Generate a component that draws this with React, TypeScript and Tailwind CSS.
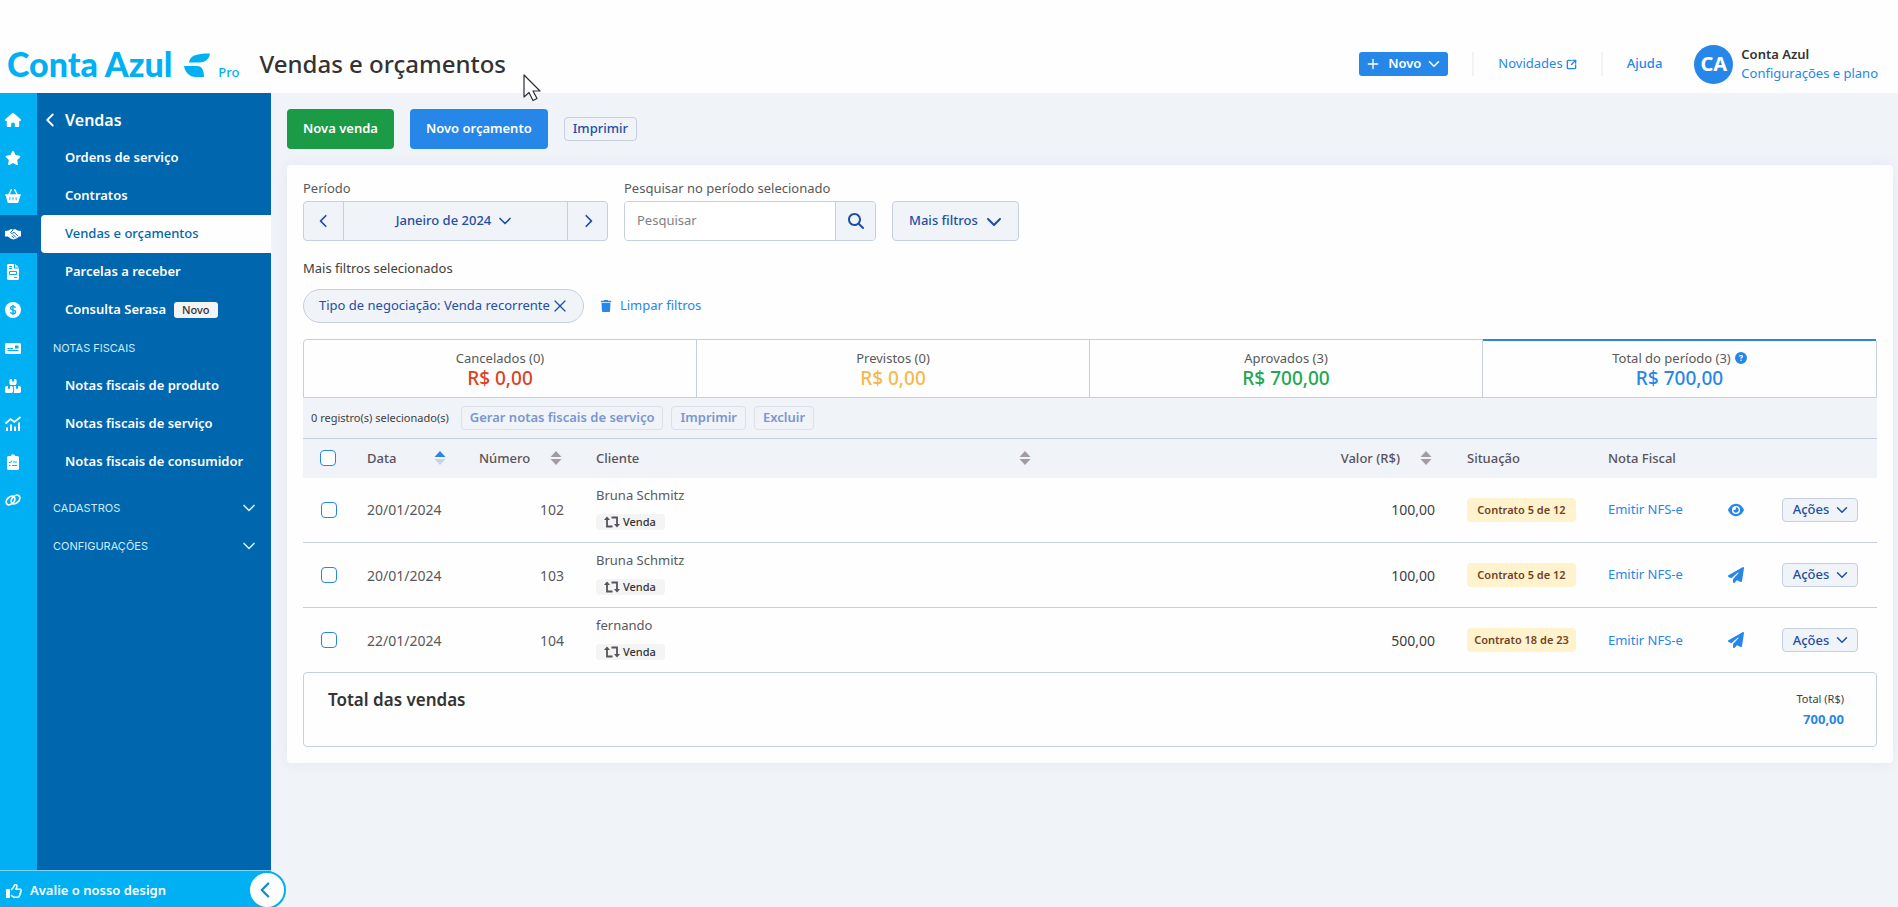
import React from "react";
import {
  FaBasketShopping,
  FaBoxesStacked,
  FaChevronDown,
  FaChevronLeft,
  FaChevronRight,
  FaCircleQuestion,
  FaEye,
  FaHouse,
  FaMagnifyingGlass,
  FaPaperPlane,
  FaRegThumbsUp,
  FaStar,
  FaTrash,
} from "react-icons/fa6";
import { ChevronDown, ChevronLeft, Plus, SquareArrowOutUpRight, X } from "lucide-react";

const HandshakeIcon = () => (
  <svg width="16" height="16" viewBox="0 0 16 16">
    <path
      fill="currentColor"
      d="M0 5l3.500-.500L6 3l2 .7L10 3l2.500 1.500L16 5v5.500h-2L12 12.300 8.500 13.500 5.500 12.500 3 10.500H0z"
    />
    <path d="M8 4 5.500 6.500 7 7.600 9 6.200 13 10M8 8.500l3 3M6.500 9.700l2.500 2.500" fill="none" stroke="#0066ad" strokeWidth=".900" />
  </svg>
);

const InvoiceIcon = () => (
  <svg width="16" height="16" viewBox="0 0 16 16">
    <path fill="currentColor" d="M2 1.500C2 .6 2.600 0 3.500 0H9v4.500h5v10c0 .9-.6 1.500-1.500 1.500h-9C2.600 16 2 15.400 2 14.500zM10 0l4 3.500h-4z" />
    <path d="M4 2.500h3M4 4.500h3M4.500 7.500h7v3h-7zM9 13.500h3" fill="none" stroke="#00b0f3" />
  </svg>
);

const CardIcon = () => (
  <svg width="16" height="16" viewBox="0 0 16 16">
    <rect y="3" width="16" height="11" rx="1.500" fill="currentColor" />
    <path d="M2.500 8.500H8M2.500 10.500h11" fill="none" stroke="#00b0f3" />
    <rect x="10" y="5.500" width="3.500" height="3" fill="#00b0f3" />
  </svg>
);

const DollarIcon = () => (
  <svg width="16" height="16" viewBox="0 0 16 16">
    <circle cx="8" cy="8" r="8" fill="currentColor" />
    <path
      d="M10.500 5.800C10.200 4.900 9.200 4.400 8 4.400c-1.400 0-2.500.7-2.500 1.800C5.500 8.600 10.600 7.300 10.600 9.800c0 1.100-1.200 1.900-2.600 1.900-1.300 0-2.300-.6-2.600-1.600M8 3v10"
      fill="none"
      stroke="#00b0f3"
      strokeWidth="1.400"
    />
  </svg>
);

const ChartIcon = () => (
  <svg width="16" height="16" viewBox="0 0 16 16" fill="none" stroke="currentColor" strokeWidth="1.700">
    <path d="M.5 7.500 5.500 3l4 3L15.500 1" />
    <path d="M2 15v-3.500M6 15V8.500M10 15v-4.500M14 15V6.500" strokeWidth="2" />
  </svg>
);

const ClipboardIcon = () => (
  <svg width="16" height="16" viewBox="0 0 16 16">
    <path
      fill="currentColor"
      d="M3.500 2h2.200a2.400 2.400 0 0 1 4.600 0h2.200A1.500 1.500 0 0 1 14 3.500v11a1.500 1.500 0 0 1-1.500 1.500h-9A1.500 1.500 0 0 1 2 14.500v-11A1.500 1.500 0 0 1 3.500 2z"
    />
    <path d="m4 8 1 1 2-2.500M8 8h4M4 11.500h1.500M7 11.500h5" fill="none" stroke="#00b0f3" />
  </svg>
);

const LinkIcon = () => (
  <svg width="16" height="16" viewBox="0 0 16 16" fill="none" stroke="currentColor" strokeWidth="1.700">
    <ellipse cx="5.500" cy="8.500" rx="5" ry="3.500" transform="rotate(-45 5.500 8.500)" />
    <ellipse cx="10.500" cy="7.500" rx="5" ry="3.500" transform="rotate(-45 10.500 7.500)" />
  </svg>
);

const railIcons = [
  { label: "Início", icon: <FaHouse /> },
  { label: "Favoritos", icon: <FaStar /> },
  { label: "Compras", icon: <FaBasketShopping /> },
  { label: "Vendas", icon: <HandshakeIcon />, active: true },
  { label: "Contratos", icon: <InvoiceIcon /> },
  { label: "Financeiro", icon: <DollarIcon /> },
  { label: "Conta", icon: <CardIcon /> },
  { label: "Estoque", icon: <FaBoxesStacked /> },
  { label: "Relatórios", icon: <ChartIcon /> },
  { label: "Contador", icon: <ClipboardIcon /> },
  { label: "Integrações", icon: <LinkIcon /> },
];

const tabs = [
  { label: "Cancelados (0)", value: "R$ 0,00", color: "text-[#d9431e]" },
  { label: "Previstos (0)", value: "R$ 0,00", color: "text-[#f6b84b]" },
  { label: "Aprovados (3)", value: "R$ 700,00", color: "text-[#22a652]" },
  { label: "Total do período (3)", value: "R$ 700,00", color: "text-[#2687e9]", active: true },
];

const rows = [
  { date: "20/01/2024", number: 102, client: "Bruna Schmitz", value: "100,00", status: "Contrato 5 de 12", seen: true },
  { date: "20/01/2024", number: 103, client: "Bruna Schmitz", value: "100,00", status: "Contrato 5 de 12" },
  { date: "22/01/2024", number: 104, client: "fernando", value: "500,00", status: "Contrato 18 de 23" },
];

const Logo = () => (
  <div className="flex items-end text-[#00b0f3]">
    <span className="font-[Lato] font-black text-[34px] leading-[36px]">Conta Azul</span>
    <svg width="26" height="25" viewBox="0 0 26 25" className="ml-3 mb-1 shrink-0" fill="currentColor">
      <path d="M5 9.500C6 3 11 .5 26 .5C25 6 22 9.500 15 9.500z" />
      <path d="M0 13h13c4 0 7 3 7 11H12C5 24 1 19 0 13z" />
    </svg>
    <span className="ml-2 text-[13px] leading-[20px] font-medium">Pro</span>
  </div>
);

const Header = () => (
  <header className="h-[93px] pt-[35px] pl-[7px] pr-5 flex items-center bg-[#fefefe]">
    <Logo />
    <h1 className="ml-5 text-[24px] leading-[32px] font-medium text-[#333]">Vendas e orçamentos</h1>
    <div className="ml-auto flex items-center">
      <button className="h-6 pl-[6px] pr-[5px] flex items-center rounded-[3px] bg-[#2687e9] text-white text-[13px] font-semibold">
        <Plus size={16} />
        <span className="ml-[7px] mr-1">Novo</span>
        <ChevronDown size={18} />
      </button>
      <span className="mx-6 w-[2px] h-6 bg-[#f0f3f8]" />
      <a href="#" className="flex items-center gap-[3px] text-[13px] text-[#2687e9]">
        Novidades <SquareArrowOutUpRight size={11} strokeWidth={3} />
      </a>
      <span className="mx-6 w-[2px] h-6 bg-[#f0f3f8]" />
      <a href="#" className="text-[13px] font-medium text-[#2687e9]">
        Ajuda
      </a>
      <div className="ml-8 size-[39px] flex items-center justify-center rounded-full bg-[#2687e9] text-white text-[20px] font-bold">
        CA
      </div>
      <div className="ml-2 text-[13px] leading-[19px]">
        <p className="font-semibold text-[#333]">Conta Azul</p>
        <a href="#" className="block text-[#2687e9]">
          Configurações e plano
        </a>
      </div>
    </div>
  </header>
);

const Sidebar = () => (
  <aside className="w-[271px] shrink-0 flex flex-col bg-[#0066ad] text-white">
    <div className="flex grow">
      <nav className="w-[37px] shrink-0 pt-[8px] bg-[#00b0f3]">
        {railIcons.map((item) => (
          <a
            key={item.label}
            href="#"
            aria-label={item.label}
            className={`h-[38px] pl-[5px] flex items-center text-[16px] ${item.active ? "w-[41px] bg-[#0066ad]" : ""}`}
          >
            {item.icon}
          </a>
        ))}
      </nav>
      <nav className="grow pt-[8px] text-[13px] font-semibold">
        <a href="#" className="h-[38px] pl-[2px] flex items-center text-[16px]">
          <ChevronLeft size={22} className="mr-1" />
          Vendas
        </a>
        <a href="#" className="h-[38px] pl-7 flex items-center">
          Ordens de serviço
        </a>
        <a href="#" className="h-[38px] pl-7 flex items-center">
          Contratos
        </a>
        <a href="#" className="h-[38px] ml-1 pl-6 flex items-center rounded-l-[4px] bg-[#fefefe] text-[#0066ad] font-medium">
          Vendas e orçamentos
        </a>
        <a href="#" className="h-[38px] pl-7 flex items-center">
          Parcelas a receber
        </a>
        <a href="#" className="h-[38px] pl-7 flex items-center">
          Consulta Serasa
          <span className="ml-2 h-4 px-2 flex items-center rounded-[3px] bg-[#f4f4f4] text-[#333] text-[11px] font-medium">
            Novo
          </span>
        </a>
        <p className="h-[38px] pl-4 flex items-center font-[Inter] text-[11px] font-normal text-[#cdeefd]">NOTAS FISCAIS</p>
        <a href="#" className="h-[38px] pl-7 flex items-center">
          Notas fiscais de produto
        </a>
        <a href="#" className="h-[38px] pl-7 flex items-center">
          Notas fiscais de serviço
        </a>
        <a href="#" className="h-[38px] pl-7 flex items-center">
          Notas fiscais de consumidor
        </a>
        <button className="mt-2 w-full h-[38px] pl-4 pr-3 flex items-center justify-between font-[Inter] text-[11px] font-normal text-[#cdeefd]">
          CADASTROS <ChevronDown size={20} />
        </button>
        <button className="w-full h-[38px] pl-4 pr-3 flex items-center justify-between font-[Inter] text-[11px] font-normal text-[#cdeefd]">
          CONFIGURAÇÕES <ChevronDown size={20} />
        </button>
      </nav>
    </div>
    <div className="relative h-[37px] pt-1 pl-[6px] flex items-center border-t border-[#7fd3f7] bg-[#00b0f3] text-[13px] font-semibold">
      <FaRegThumbsUp size={16} className="mr-2" />
      <a href="#">Avalie o nosso design</a>
      <button
        aria-label="Recolher menu"
        className="absolute -right-[15px] top-0 size-[38px] pr-1 flex items-center justify-center rounded-full border-2 border-[#00b0f3] bg-white text-[#0091d0]"
      >
        <ChevronLeft size={26} />
      </button>
    </div>
  </aside>
);

const SortIcon = ({ asc }: { asc?: boolean }) => (
  <svg width="12" height="14" viewBox="0 0 12 14" className="shrink-0">
    <path d="M6 0l5.500 6h-11z" fill={asc ? "#2687e9" : "#a39ba3"} />
    <path d="M6 14l5.500-6h-11z" fill={asc ? "#c9d3e2" : "#a39ba3"} />
  </svg>
);

const RecurringIcon = () => (
  <svg width="16" height="12" viewBox="0 0 16 12" fill="none" stroke="#58525c" strokeWidth="1.800">
    <path d="M3 3v7.500h5.500M7.500 1.500H13V9" />
    <path d="M0 4 3 .5 6 4zM10 8l3 3.500L16 8z" fill="#58525c" stroke="none" />
  </svg>
);

const Checkbox = ({ label }: { label: string }) => (
  <input
    type="checkbox"
    aria-label={label}
    className="block size-4 appearance-none rounded-[4px] border border-[#2687e9] bg-white"
  />
);

const Filters = () => (
  <>
    <div className="flex items-end gap-4 text-[13px]">
      <div>
        <p className="mb-1 leading-[18px] text-[#595959]">Período</p>
        <div className="w-[305px] h-10 flex rounded-[4px] border border-[#c5cfdf] bg-[#f0f3f8] text-[#1f4fa3]">
          <button aria-label="Mês anterior" className="w-10 flex items-center justify-center border-r border-[#c5cfdf]">
            <FaChevronLeft size={14} />
          </button>
          <button className="grow flex items-center justify-center gap-1 font-medium">
            Janeiro de 2024 <ChevronDown size={20} />
          </button>
          <button aria-label="Próximo mês" className="w-10 flex items-center justify-center border-l border-[#c5cfdf]">
            <FaChevronRight size={14} />
          </button>
        </div>
      </div>
      <div>
        <label htmlFor="search" className="block mb-1 leading-[18px] text-[#595959]">
          Pesquisar no período selecionado
        </label>
        <div className="w-[252px] h-10 flex rounded-[4px] border border-[#c5cfdf] overflow-hidden">
          <input
            id="search"
            type="text"
            placeholder="Pesquisar"
            className="grow min-w-0 px-3 bg-white placeholder:text-[#7f7f85]"
          />
          <button
            aria-label="Buscar"
            className="w-10 flex items-center justify-center border-l border-[#c5cfdf] bg-[#f0f3f8] text-[#1f4fa3]"
          >
            <FaMagnifyingGlass size={16} />
          </button>
        </div>
      </div>
      <button className="h-10 px-4 flex items-center gap-2 rounded-[4px] border border-[#c5cfdf] bg-[#f0f3f8] font-medium text-[#1f4fa3]">
        Mais filtros <FaChevronDown size={16} />
      </button>
    </div>
    <p className="mt-[18px] text-[13px] leading-[18px] text-[#404040]">Mais filtros selecionados</p>
    <div className="mt-3 flex items-center gap-4 text-[13px]">
      <span className="h-[34px] pl-[15px] pr-[13px] flex items-center rounded-full border border-[#c5cfdf] bg-[#f0f3f8] text-[#1f4fa3]">
        Tipo de negociação: Venda recorrente
        <button aria-label="Remover filtro">
          <X size={20} strokeWidth={1.5} />
        </button>
      </span>
      <button className="flex items-center gap-2 text-[#2687e9]">
        <FaTrash size={12} /> Limpar filtros
      </button>
    </div>
  </>
);

const SalesTable = () => (
  <table className="w-full table-fixed text-[13px] text-[#595959]">
    <colgroup>
      <col className="w-[64px]" />
      <col className="w-[96px]" />
      <col className="w-[117px]" />
      <col />
      <col className="w-[120px]" />
      <col className="w-[141px]" />
      <col className="w-[108px]" />
      <col className="w-[70px]" />
      <col className="w-[123px]" />
    </colgroup>
    <thead className="bg-[#f0f3f8] border-t border-[#c5cfdf] text-[#58525c]">
      <tr className="h-[39px] text-left [&_th]:font-medium">
        <th className="pl-[17px]">
          <Checkbox label="Selecionar todos" />
        </th>
        <th>
          <div className="pr-[17px] flex items-center justify-between">
            Data <SortIcon asc />
          </div>
        </th>
        <th>
          <div className="pl-4 pr-[18px] flex items-center justify-between">
            Número <SortIcon />
          </div>
        </th>
        <th>
          <div className="pl-4 pr-[284px] flex items-center justify-between">
            Cliente <SortIcon />
          </div>
        </th>
        <th>
          <div className="pr-[3px] flex items-center justify-end gap-5">
            <span className="whitespace-nowrap">Valor (R$)</span> <SortIcon />
          </div>
        </th>
        <th className="pl-8">Situação</th>
        <th className="pl-8" colSpan={3}>
          Nota Fiscal
        </th>
      </tr>
    </thead>
    <tbody>
      {rows.map((row) => (
        <tr key={row.number} className="h-[65px] border-b border-[#c5cfdf] last:border-b-0">
          <td className="pl-[18px]">
            <Checkbox label={`Selecionar venda ${row.number}`} />
          </td>
          <td className="text-[14px]">{row.date}</td>
          <td className="pr-4 text-right text-[14px]">{row.number}</td>
          <td className="pl-4 pb-1">
            <p className="leading-[18px]">{row.client}</p>
            <span className="mt-[10px] w-[69px] h-4 pl-2 flex items-center gap-[3px] rounded-[4px] bg-[#f4f4f4] text-[11px] font-medium text-[#333]">
              <RecurringIcon /> Venda
            </span>
          </td>
          <td className="text-right text-[14px] text-[#404040]">{row.value}</td>
          <td className="pl-8">
            <span className="w-[109px] h-6 flex items-center justify-center rounded-[4px] bg-[#fef3cd] text-[11px] font-semibold whitespace-nowrap text-[#733f28]">
              {row.status}
            </span>
          </td>
          <td className="pl-8 whitespace-nowrap">
            <a href="#" className="text-[#2687e9]">
              Emitir NFS-e
            </a>
          </td>
          <td className="pl-11">
            <button aria-label={row.seen ? "Visualizar" : "Enviar"} className="block text-[#2687e9]">
              {row.seen ? <FaEye size={16} /> : <FaPaperPlane size={16} />}
            </button>
          </td>
          <td>
            <button className="ml-auto mr-[19px] w-[76px] h-6 pl-1 flex items-center justify-center gap-1 rounded-[4px] border border-[#c5cfdf] bg-[#f0f3f8] font-medium text-[#1f4fa3]">
              Ações <ChevronDown size={18} />
            </button>
          </td>
        </tr>
      ))}
    </tbody>
  </table>
);

const App = () => {
  return (
    <div className="relative min-h-screen flex flex-col overflow-hidden bg-[#f0f3f8] font-['Noto_Sans',sans-serif]">
      <Header />
      <div className="grow flex">
        <Sidebar />
        <main className="grow min-w-0 pt-4 pl-4 pr-[5px]">
          <div className="flex items-center gap-4 text-[13px]">
            <button className="h-10 px-4 rounded-[4px] bg-[#1c9b47] font-semibold text-white">Nova venda</button>
            <button className="h-10 px-4 rounded-[4px] bg-[#2687e9] font-semibold text-white">Novo orçamento</button>
            <button className="h-6 px-2 flex items-center rounded-[4px] border border-[#c5cfdf] font-medium text-[#1f4fa3]">
              Imprimir
            </button>
          </div>
          <section className="mt-4 p-4 pt-[14px] rounded-[4px] bg-[#fefefe] shadow-[0_0_16px_rgba(60,90,140,0.06)]">
            <Filters />
            <div className="mt-4 grid grid-cols-4 rounded-t-[4px] border border-[#c5cfdf] divide-x divide-[#c5cfdf]">
              {tabs.map((tab) => (
                <button
                  key={tab.label}
                  className={`relative h-[57px] flex flex-col items-center justify-center ${
                    tab.active ? "before:absolute before:-top-px before:inset-x-0 before:h-[2px] before:bg-[#2687e9]" : ""
                  }`}
                >
                  <span className="flex items-center gap-1 text-[13px] leading-[18px] text-[#595959]">
                    {tab.label}
                    {tab.active && <FaCircleQuestion size={12} className="text-[#2687e9]" />}
                  </span>
                  <span className={`text-[19px] leading-[22px] font-medium ${tab.color}`}>{tab.value}</span>
                </button>
              ))}
            </div>
            <div className="h-10 px-2 flex items-center gap-2 bg-[#f0f3f8] text-[13px] font-semibold text-[#7896cf]">
              <span className="mr-1 text-[11px] font-normal text-[#404040]">0 registro(s) selecionado(s)</span>
              <button className="h-6 px-2 flex items-center rounded-[4px] border border-[#dbe0e9]">
                Gerar notas fiscais de serviço
              </button>
              <button className="h-6 px-2 flex items-center rounded-[4px] border border-[#dbe0e9]">Imprimir</button>
              <button className="h-6 px-2 flex items-center rounded-[4px] border border-[#dbe0e9]">Excluir</button>
            </div>
            <SalesTable />
            <div className="-mt-px h-[75px] pt-4 pl-6 pr-8 flex justify-between rounded-[4px] border border-[#c5cfdf]">
              <h2 className="text-[17px] leading-[22px] font-semibold text-[#333]">Total das vendas</h2>
              <div className="text-right">
                <p className="text-[11px] leading-[20px] text-[#404040]">Total (R$)</p>
                <p className="text-[13px] leading-[20px] font-bold text-[#2687e9]">700,00</p>
              </div>
            </div>
          </section>
        </main>
      </div>
      {/* mouse pointer */}
      <svg width="19" height="28" viewBox="0 0 19 28" className="absolute left-[523px] top-[74px]">
        <path
          d="M1 1v22l5-4.500 4 8 4-2-4-7.500h7z"
          fill="#fff"
          stroke="#2c2c3a"
          strokeWidth="1.200"
          strokeLinejoin="round"
        />
      </svg>
    </div>
  );
};

export default App;
